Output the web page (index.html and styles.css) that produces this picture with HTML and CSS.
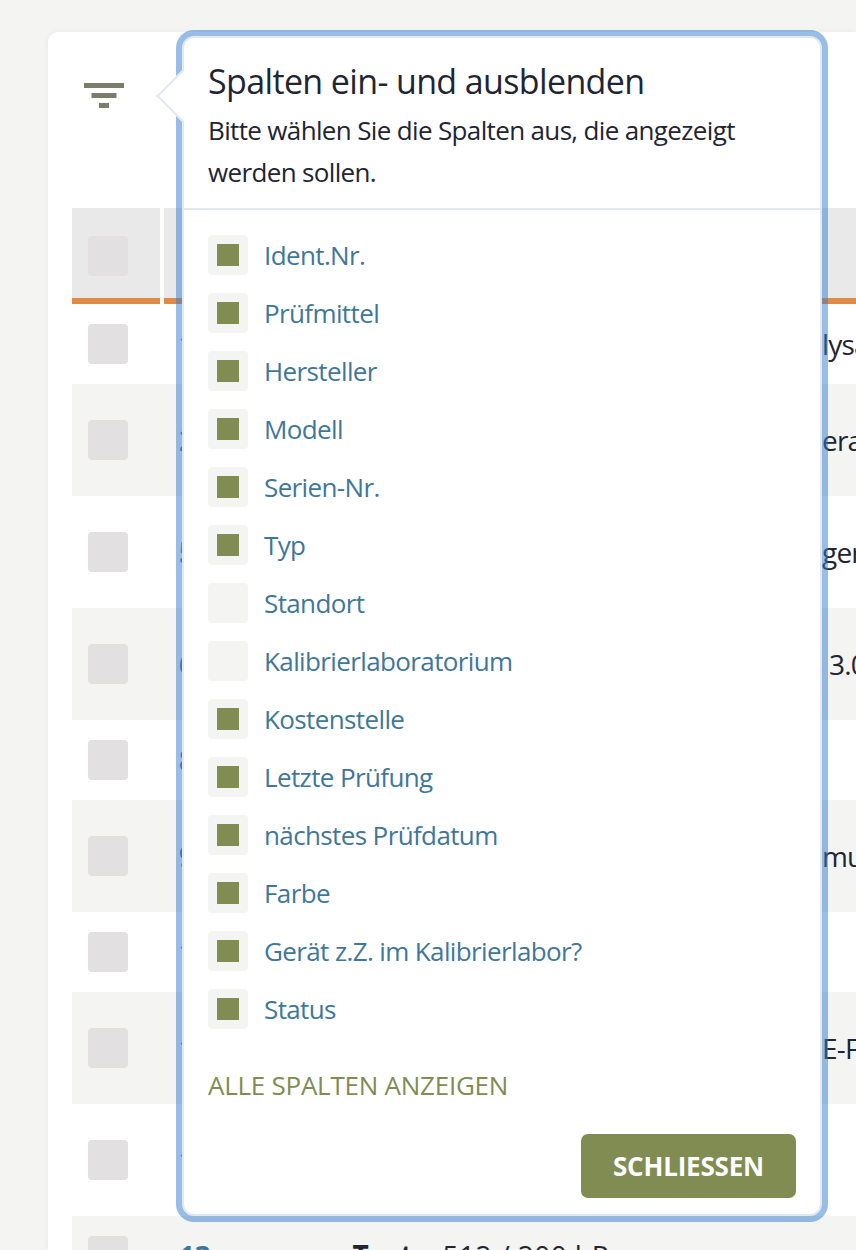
FILE: index.html
```html
<!DOCTYPE html>
<html lang="de">
<head>
<meta charset="utf-8">
<title>Spalten ein- und ausblenden</title>
<link rel="stylesheet" href="styles.css">
</head>
<body>
<main class="card">
  <div class="toolbar">
    <svg class="filter-icon" width="40" height="26" viewBox="0 0 40 26" aria-hidden="true">
      <rect x="0" y="0" width="40" height="5"/>
      <rect x="7.5" y="10" width="25" height="5"/>
      <rect x="15" y="20" width="10" height="5"/>
    </svg>
  </div>
  <div class="table">
    <div class="row head">
      <div class="check-cell"><span class="box"></span></div>
      <div class="main-cell"></div>
    </div>
    <div class="row h80"><div class="check-cell"><span class="box"></span></div><div class="main-cell"><b class="id">1</b><span class="end">lysator</span></div></div>
    <div class="row h112 alt"><div class="check-cell"><span class="box"></span></div><div class="main-cell"><b class="id">2</b><span class="end">erat</span></div></div>
    <div class="row h112"><div class="check-cell"><span class="box"></span></div><div class="main-cell"><b class="id">5</b><span class="end">gerät</span></div></div>
    <div class="row h112 alt"><div class="check-cell"><span class="box"></span></div><div class="main-cell"><b class="id">6</b><span class="end inset">3.0</span></div></div>
    <div class="row h80"><div class="check-cell"><span class="box"></span></div><div class="main-cell"><b class="id">8</b></div></div>
    <div class="row h112 alt"><div class="check-cell"><span class="box"></span></div><div class="main-cell"><b class="id">9</b><span class="end">mu</span></div></div>
    <div class="row h80"><div class="check-cell"><span class="box"></span></div><div class="main-cell"><b class="id">1</b></div></div>
    <div class="row h112 alt"><div class="check-cell"><span class="box"></span></div><div class="main-cell"><b class="id">1</b><span class="end">E-F</span></div></div>
    <div class="row h112"><div class="check-cell"><span class="box"></span></div><div class="main-cell"><b class="id">1</b></div></div>
    <div class="row h80 alt"><div class="check-cell"><span class="box"></span></div><div class="main-cell"><b class="id">13</b><span class="name"><b class="model">Test</b> 512 / 200 l-P</span></div></div>
  </div>
</main>

<section class="popover">
  <span class="arrow"></span>
  <header class="pop-head">
    <h2>Spalten ein- und ausblenden</h2>
    <p>Bitte wählen Sie die Spalten aus, die angezeigt werden sollen.</p>
  </header>
  <ul class="cols">
    <li><span class="tick on"></span><span class="label">Ident.Nr.</span></li>
    <li><span class="tick on"></span><span class="label">Prüfmittel</span></li>
    <li><span class="tick on"></span><span class="label">Hersteller</span></li>
    <li><span class="tick on"></span><span class="label">Modell</span></li>
    <li><span class="tick on"></span><span class="label">Serien-Nr.</span></li>
    <li><span class="tick on"></span><span class="label">Typ</span></li>
    <li><span class="tick"></span><span class="label">Standort</span></li>
    <li><span class="tick"></span><span class="label">Kalibrierlaboratorium</span></li>
    <li><span class="tick on"></span><span class="label">Kostenstelle</span></li>
    <li><span class="tick on"></span><span class="label">Letzte Prüfung</span></li>
    <li><span class="tick on"></span><span class="label">nächstes Prüfdatum</span></li>
    <li><span class="tick on"></span><span class="label">Farbe</span></li>
    <li><span class="tick on"></span><span class="label">Gerät z.Z. im Kalibrierlabor?</span></li>
    <li><span class="tick on"></span><span class="label">Status</span></li>
  </ul>
  <div class="show-all">ALLE SPALTEN ANZEIGEN</div>
  <div class="actions"><button class="close" type="button">SCHLIESSEN</button></div>
</section>
</body>
</html>
```

FILE: styles.css
```css
* { box-sizing: border-box; }
html, body { margin: 0; height: 1250px; overflow: hidden; }
body {
  background: #f4f4f2;
  font-family: "Open Sans", sans-serif;
  color: #1f2533;
  padding: 32px 0 0 48px;
  position: relative;
}
.card {
  background: #fff;
  border-radius: 10px 0 0 0;
  padding: 0 0 0 24px;
  height: 1218px;
  overflow: hidden;
  box-shadow: 0 0 6px rgba(0,0,0,.04);
}
.toolbar { height: 176px; padding: 51px 0 0 12px; }
.filter-icon { display: block; fill: #7b7d6a; }
.table { width: 800px; }
.row { display: flex; gap: 4px; }
.row.alt { background: #f4f4f2; }
.h80 { height: 80px; }
.h112 { height: 112px; }
.row.head { height: 96px; }
.head .check-cell, .head .main-cell { background: #e9e9e9; box-shadow: inset 0 -6px 0 #e08a48; }
.check-cell { width: 88px; flex: none; display: flex; align-items: center; padding-left: 16px; }
.box { width: 40px; height: 40px; border-radius: 4px; background: #e2e0e1; display: block; }
.main-cell { flex: 1; display: flex; align-items: center; padding-left: 15px; font-size: 28px; letter-spacing: -.3px; }
.id { color: #3f779b; font-weight: 700; width: 173.5px; flex: none; }
.name { white-space: nowrap; letter-spacing: .4px; margin-top: -2px; }
.model { margin-right: 22px; }
.end { margin-left: 469.5px; white-space: nowrap; letter-spacing: -.8px; }
.end.inset { margin-left: 476.5px; }
.popover {
  position: absolute;
  left: 182px;
  top: 36px;
  width: 640px;
  height: 1180px;
  background: #fff;
  border: 2px solid #e2e8f0;
  border-radius: 12px;
  box-shadow: 0 0 0 6px rgba(49,123,206,.5);
}
.arrow {
  position: absolute;
  left: -20px;
  top: 39px;
  width: 38px;
  height: 38px;
  background: #fff;
  border-left: 2px solid #e2e8f0;
  border-bottom: 2px solid #e2e8f0;
  transform: rotate(45deg);
}
.pop-head {
  position: relative;
  padding: 19px 24px 0;
  height: 172px;
  border-bottom: 2px solid #e2e8f0;
}
.pop-head h2 { margin: 0 0 4px; font-size: 34px; line-height: 48px; font-weight: 400; letter-spacing: -.63px; color: #1f2533; }
.pop-head p { margin: 0; font-size: 26px; line-height: 42px; letter-spacing: -.65px; color: #1f2533; }
.cols { list-style: none; margin: 0; padding: 25px 24px 0; }
.cols li {
  display: flex; align-items: center; gap: 17px;
  height: 58px; padding-bottom: 18px;
  font-size: 26px; letter-spacing: -.62px; color: #3f779b; white-space: nowrap;
}
.label { margin-left: -1px; }
.tick { width: 40px; height: 40px; flex: none; border-radius: 4px; background: #f4f4f2; display: flex; align-items: center; justify-content: center; }
.tick.on::after { content: ""; width: 22px; height: 22px; background: #818c53; }
.show-all { padding: 20px 0 0 24px; font-size: 26px; line-height: 36px; letter-spacing: -.25px; color: #818c53; }
.actions { position: absolute; right: 24px; bottom: 16px; }
.close {
  display: block; width: 215px; height: 64px; padding: 0; border: 0; border-radius: 7px;
  background: #818c53; color: #fff; font: 700 26px "Open Sans", sans-serif; letter-spacing: -.2px;
}
```
